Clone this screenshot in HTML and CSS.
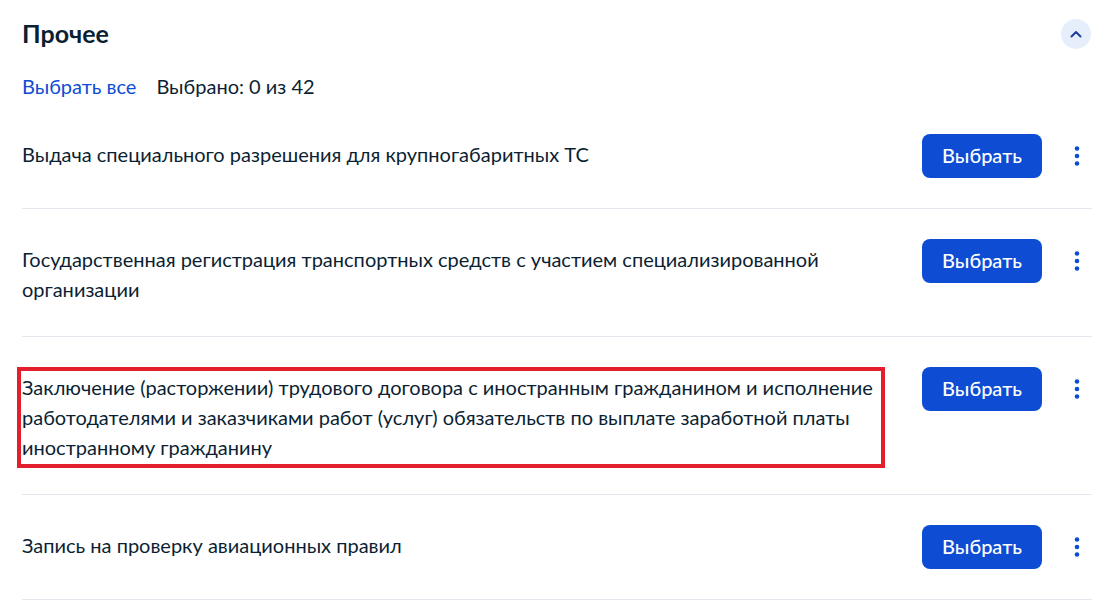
FILE: index.html
```html
<!DOCTYPE html>
<html lang="ru">
<head>
<meta charset="utf-8">
<title>Прочее</title>
<link rel="stylesheet" href="styles.css">
</head>
<body>
<section class="section">
  <div class="header">
    <h2 class="title">Прочее</h2>
    <button class="collapse" aria-label="Свернуть">
      <svg width="12" height="8" viewBox="0 0 12 8"><path d="M1.5 6.5L6 2l4.5 4.5" fill="none" stroke="#1f3f9a" stroke-width="2" stroke-linecap="round" stroke-linejoin="round"/></svg>
    </button>
  </div>
  <div class="toolbar">
    <a class="link" href="#">Выбрать все</a>
    <span class="count">Выбрано: 0 из 42</span>
  </div>
  <ul class="list">
    <li class="row">
      <p class="name">Выдача специального разрешения для крупногабаритных ТС</p>
      <button class="btn">Выбрать</button>
      <button class="kebab" aria-label="Ещё"><svg width="30" height="44" viewBox="0 0 30 44"><circle cx="15" cy="14.5" r="2.3"/><circle cx="15" cy="22" r="2.3"/><circle cx="15" cy="29.5" r="2.3"/></svg></button>
    </li>
    <li class="row">
      <p class="name">Государственная регистрация транспортных средств с участием специализированной организации</p>
      <button class="btn">Выбрать</button>
      <button class="kebab" aria-label="Ещё"><svg width="30" height="44" viewBox="0 0 30 44"><circle cx="15" cy="14.5" r="2.3"/><circle cx="15" cy="22" r="2.3"/><circle cx="15" cy="29.5" r="2.3"/></svg></button>
    </li>
    <li class="row">
      <p class="name highlight">Заключение (расторжении) трудового договора с иностранным гражданином и исполнение работодателями и заказчиками работ (услуг) обязательств по выплате заработной платы иностранному гражданину</p>
      <button class="btn">Выбрать</button>
      <button class="kebab" aria-label="Ещё"><svg width="30" height="44" viewBox="0 0 30 44"><circle cx="15" cy="14.5" r="2.3"/><circle cx="15" cy="22" r="2.3"/><circle cx="15" cy="29.5" r="2.3"/></svg></button>
    </li>
    <li class="row">
      <p class="name">Запись на проверку авиационных правил</p>
      <button class="btn">Выбрать</button>
      <button class="kebab" aria-label="Ещё"><svg width="30" height="44" viewBox="0 0 30 44"><circle cx="15" cy="14.5" r="2.3"/><circle cx="15" cy="22" r="2.3"/><circle cx="15" cy="29.5" r="2.3"/></svg></button>
    </li>
  </ul>
</section>
</body>
</html>
```

FILE: styles.css
```css
* { box-sizing: border-box; }
html, body { margin: 0; padding: 0; background: #fff; }
body {
  font-family: Lato, "Noto Sans", sans-serif;
  color: #0b1f33;
  width: 1116px;
  height: 604px;
  overflow: hidden;
}
.section {
  padding: 17px 24px 0 22px;
}
.header {
  display: flex;
  align-items: center;
  justify-content: space-between;
  height: 32px;
}
.title {
  margin: 0;
  font-size: 25px;
  line-height: 32px;
  font-weight: 700;
}
.collapse {
  width: 30px;
  height: 30px;
  border-radius: 50%;
  border: 0;
  padding: 0;
  background: #e6eefc;
  display: flex;
  align-items: center;
  justify-content: center;
  margin-right: 1px;
  margin-top: 2px;
}
.toolbar {
  margin-top: 24px;
  display: flex;
  gap: 20px;
  font-size: 20px;
  line-height: 26px;
}
.link { color: #0d4cd3; text-decoration: none; }
.count { color: #0b1f33; }
.list {
  list-style: none;
  margin: 5px 0 0;
  padding: 0;
}
.row {
  display: flex;
  align-items: flex-start;
  padding: 30px 0;
  border-bottom: 1px solid #e3e8ee;
}
.name {
  flex: 1;
  margin: 5px 40px 0 0;
  padding-bottom: 2px;
  font-size: 20px;
  line-height: 30px;
  position: relative;
}
.highlight::after {
  content: "";
  position: absolute;
  left: -5px;
  right: -3px;
  top: -5px;
  bottom: -4px;
  border: 4px solid #e31e2d;
  pointer-events: none;
}
.btn {
  flex: none;
  width: 120px;
  height: 44px;
  border: 0;
  border-radius: 8px;
  background: #0d4cd3;
  color: #fff;
  font-family: Lato, "Noto Sans", sans-serif;
  font-size: 20px;
  font-weight: 500;
  padding: 0 0 3px;
}
.kebab {
  flex: none;
  width: 30px;
  height: 44px;
  margin-left: 20px;
  border: 0;
  padding: 0;
  background: none;
  fill: #0d4cd3;
}
.kebab svg { display: block; }
```
